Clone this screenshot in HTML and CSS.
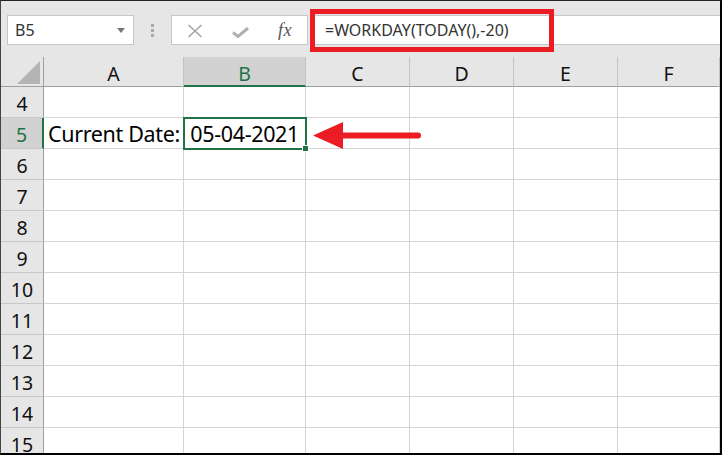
FILE: index.html
```html
<!DOCTYPE html>
<html>
<head>
<meta charset="utf-8">
<link rel="stylesheet" href="styles.css">
</head>
<body>
<div class="frame">
  <div class="toolbar">
    <div class="namebox"><span class="nb-text">B5</span><span class="nb-caret"></span></div>
    <div class="grip"><i></i><i></i><i></i></div>
    <div class="fbuttons">
      <svg class="ic-x" width="16" height="14" viewBox="0 0 16 14"><path d="M1.5 1 L14.5 13 M14.5 1 L1.5 13" stroke="#a3a3a3" stroke-width="1.5" fill="none"/></svg>
      <svg class="ic-ok" width="17" height="11" viewBox="0 0 17 11"><path d="M1 5.5 L6 9.5 L16 1" stroke="#b0b0b0" stroke-width="3" fill="none"/></svg>
      <span class="ic-fx">fx</span>
    </div>
    <div class="formula">=WORKDAY(TODAY(),-20)</div>
  </div>
  <div class="sheet">
    <div class="corner"><span class="tri"></span></div>
    <div class="ch">A</div>
    <div class="ch sel">B</div>
    <div class="ch">C</div>
    <div class="ch">D</div>
    <div class="ch">E</div>
    <div class="ch">F</div>

    <div class="rh">4</div><div class="c"></div><div class="c"></div><div class="c"></div><div class="c"></div><div class="c"></div><div class="c"></div>
    <div class="rh sel">5</div><div class="c txt">Current Date:</div><div class="c num active">05-04-2021<span class="handle"></span></div><div class="c"></div><div class="c"></div><div class="c"></div><div class="c"></div>
    <div class="rh">6</div><div class="c"></div><div class="c"></div><div class="c"></div><div class="c"></div><div class="c"></div><div class="c"></div>
    <div class="rh">7</div><div class="c"></div><div class="c"></div><div class="c"></div><div class="c"></div><div class="c"></div><div class="c"></div>
    <div class="rh">8</div><div class="c"></div><div class="c"></div><div class="c"></div><div class="c"></div><div class="c"></div><div class="c"></div>
    <div class="rh">9</div><div class="c"></div><div class="c"></div><div class="c"></div><div class="c"></div><div class="c"></div><div class="c"></div>
    <div class="rh">10</div><div class="c"></div><div class="c"></div><div class="c"></div><div class="c"></div><div class="c"></div><div class="c"></div>
    <div class="rh">11</div><div class="c"></div><div class="c"></div><div class="c"></div><div class="c"></div><div class="c"></div><div class="c"></div>
    <div class="rh">12</div><div class="c"></div><div class="c"></div><div class="c"></div><div class="c"></div><div class="c"></div><div class="c"></div>
    <div class="rh">13</div><div class="c"></div><div class="c"></div><div class="c"></div><div class="c"></div><div class="c"></div><div class="c"></div>
    <div class="rh">14</div><div class="c"></div><div class="c"></div><div class="c"></div><div class="c"></div><div class="c"></div><div class="c"></div>
    <div class="rh">15</div><div class="c"></div><div class="c"></div><div class="c"></div><div class="c"></div><div class="c"></div><div class="c"></div>
  </div>
  <div class="redbox"></div>
  <svg class="arrow" width="112" height="30" viewBox="0 0 112 30">
    <path d="M0 13.5 L30 0 L30 27 Z" fill="#ec1c24"/>
    <path d="M29 13.5 L105 13.5" stroke="#ec1c24" stroke-width="6" stroke-linecap="round"/>
  </svg>
</div>
</body>
</html>
```
FILE: styles.css
```css
* { box-sizing: border-box; }
html, body { margin: 0; padding: 0; background: #fff; }
.frame {
  position: relative;
  width: 722px;
  height: 455px;
  overflow: hidden;
  background: #e6e6e6;
  border-top: 1px solid #222;
  border-left: 1px solid #444;
  border-right: 2px solid #000;
  border-bottom: 2px solid #000;
  font-family: "Noto Sans", "Liberation Sans", sans-serif;
}
.toolbar {
  height: 56px;
  display: flex;
  align-items: flex-start;
  padding: 14px 0 0 6px;
}
.namebox {
  width: 127px;
  height: 30px;
  background: #fff;
  border: 1px solid #c6c6c6;
  display: flex;
  align-items: center;
  justify-content: space-between;
  padding: 0 8px 0 7px;
}
.nb-text { font-size: 16px; color: #333; }
.nb-caret {
  width: 0; height: 0;
  border-left: 4px solid transparent;
  border-right: 4px solid transparent;
  border-top: 5px solid #777;
  margin-top: 1px;
}
.grip {
  margin-left: 17px;
  width: 3px;
  height: 30px;
  display: flex;
  flex-direction: column;
  justify-content: center;
  gap: 2px;
}
.grip i { display: block; width: 3px; height: 3px; background: #a8a8a8; }
.fbuttons {
  margin-left: 17px;
  width: 137px;
  height: 30px;
  background: #fff;
  border: 1px solid #c6c6c6;
  display: flex;
  align-items: center;
  padding-left: 15px;
}
.ic-x { margin-top: 1px; }
.ic-ok { margin-left: 29px; margin-top: 4px; }
.ic-fx {
  margin-left: 29px;
  font-family: "Liberation Serif", serif;
  font-style: italic;
  font-size: 18px;
  color: #555;
  letter-spacing: 0.5px;
}
.formula {
  margin-left: 2px;
  flex: 1;
  height: 30px;
  background: #fff;
  border: 1px solid #c6c6c6;
  border-right: none;
  display: flex;
  align-items: center;
  padding-left: 14px;
  font-size: 16px;
  color: #333;
}
.sheet {
  display: grid;
  grid-template-columns: 43px 140px 122px 104px 104px 104px 1fr;
  grid-template-rows: 30px repeat(12, 31px);
  background: #fff;
}
.corner {
  position: relative;
  background: #e6e6e6;
  border-right: 1px solid #9e9e9e;
  border-bottom: 1px solid #9e9e9e;
}
.tri {
  position: absolute;
  left: 16px;
  top: 4px;
  width: 0; height: 0;
  border-left: 23px solid transparent;
  border-bottom: 23px solid #b4b4b4;
}
.ch {
  background: #e6e6e6;
  border-right: 1px solid #c4c4c4;
  border-bottom: 1px solid #9e9e9e;
  display: flex;
  align-items: center;
  justify-content: center;
  padding-top: 3px;
  font-size: 19.5px;
  color: #111;
}
.ch.sel {
  background: #d2d2d2;
  color: #217346;
  border-bottom: 2px solid #217346;
  padding-top: 4px;
}
.rh {
  background: #e6e6e6;
  border-right: 1px solid #9e9e9e;
  border-bottom: 1px solid #c8c8c8;
  display: flex;
  align-items: center;
  justify-content: center;
  padding-top: 3px;
  font-size: 19.5px;
  color: #111;
}
.rh.sel {
  background: #d2d2d2;
  color: #217346;
  border-right: 2px solid #217346;
}
.c {
  border-right: 1px solid #d4d4d4;
  border-bottom: 1px solid #d4d4d4;
  font-size: 21.5px;
  letter-spacing: -0.35px;
  color: #000;
  display: flex;
  align-items: center;
  white-space: nowrap;
}
.txt { padding-left: 4px; padding-top: 1px; }
.num { justify-content: flex-end; padding-right: 6px; padding-top: 1px; position: relative; }
.active { outline: 2px solid #217346; outline-offset: -1px; }
.handle {
  position: absolute;
  right: -4px;
  bottom: -4px;
  width: 7px;
  height: 7px;
  background: #217346;
  border: 1px solid #fff;
}
.redbox {
  position: absolute;
  left: 309px;
  top: 8px;
  width: 244px;
  height: 43px;
  border: 5px solid #ec1c24;
}
.arrow {
  position: absolute;
  left: 312px;
  top: 121px;
}
```
